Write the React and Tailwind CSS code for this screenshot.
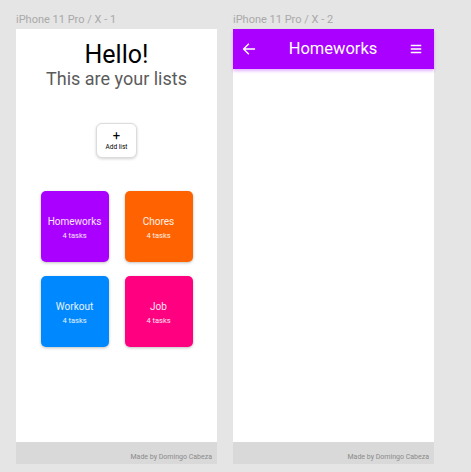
import React from "react";

const cards = [
  { name: "Homeworks", bg: "bg-[#aa00ff]" },
  { name: "Chores", bg: "bg-[#ff6200]" },
  { name: "Workout", bg: "bg-[#0088ff]" },
  { name: "Job", bg: "bg-[#ff0080]" },
];

function Footer() {
  return (
    <div className="h-[22px] bg-[#d9d9d9] flex items-center justify-end pr-[5px] pt-[8px]">
      <span className="text-[7px] leading-[8px] text-[#8a8a8a]">Made by Domingo Cabeza</span>
    </div>
  );
}

export default function App() {
  return (
    <div
      className="w-[471px] h-[472px] bg-[#e5e5e5] flex gap-[16px] pl-[16px] pt-[13px] overflow-hidden"
      style={{ fontFamily: "Roboto, 'Liberation Sans', sans-serif" }}
    >
      <div className="flex flex-col w-[201px]">
        <div className="text-[11px] leading-[13px] h-[13px] mb-[3px] text-[#a9a9a9]">iPhone 11 Pro / X - 1</div>
        <div className="h-[435px] flex flex-col bg-white">
          <div className="flex-1 flex flex-col items-center">
            <div className="text-[25px] leading-[30px] mt-[11px] text-black">Hello!</div>
            <div className="text-[18px] leading-[21px] -mt-[2px] text-[#5b5b5b]">This are your lists</div>
            <div className="mt-[34px] w-[41px] h-[35px] rounded-[6px] border border-[#dcdcdc] shadow-[0_1px_3px_rgba(0,0,0,0.18)] flex flex-col items-center justify-center bg-white">
              <span className="text-[13px] leading-[12px] text-black">+</span>
              <span className="text-[6.5px] leading-[9px] mt-[1px] text-black">Add list</span>
            </div>
            <div className="mt-[33px] grid grid-cols-[68px_68px] gap-x-[16px] gap-y-[14px]">
              {cards.map((c) => (
                <div
                  key={c.name}
                  className={`${c.bg} h-[71px] rounded-[5px] shadow-[0_1px_3px_rgba(0,0,0,0.25)] flex flex-col items-center justify-center pt-[4px] text-white/90`}
                >
                  <span className="text-[10px] leading-[12px]">{c.name}</span>
                  <span className="text-[7.5px] leading-[10px] mt-[3px]">4 tasks</span>
                </div>
              ))}
            </div>
          </div>
          <Footer />
        </div>
      </div>

      <div className="flex flex-col w-[201px]">
        <div className="text-[11px] leading-[13px] h-[13px] mb-[3px] text-[#a9a9a9]">iPhone 11 Pro / X - 2</div>
        <div className="h-[435px] flex flex-col bg-white">
          <div className="flex-1 flex flex-col">
            <div className="h-[40px] bg-[#aa00ff] flex items-center justify-between pl-[8px] pr-[11px] shadow-[0_2px_3px_rgba(170,0,255,0.3)] relative">
              <svg width="16" height="16" viewBox="0 0 24 24" fill="none" stroke="white" strokeWidth="2.2" strokeLinecap="square">
                <path d="M20 12H5M11 5l-7 7 7 7" />
              </svg>
              <span className="text-[16.5px] leading-[20px] text-white">Homeworks</span>
              <svg width="14" height="14" viewBox="0 0 24 24" fill="none" stroke="white" strokeWidth="2.5">
                <path d="M3 6h18M3 12h18M3 18h18" />
              </svg>
            </div>
          </div>
          <Footer />
        </div>
      </div>
    </div>
  );
}
